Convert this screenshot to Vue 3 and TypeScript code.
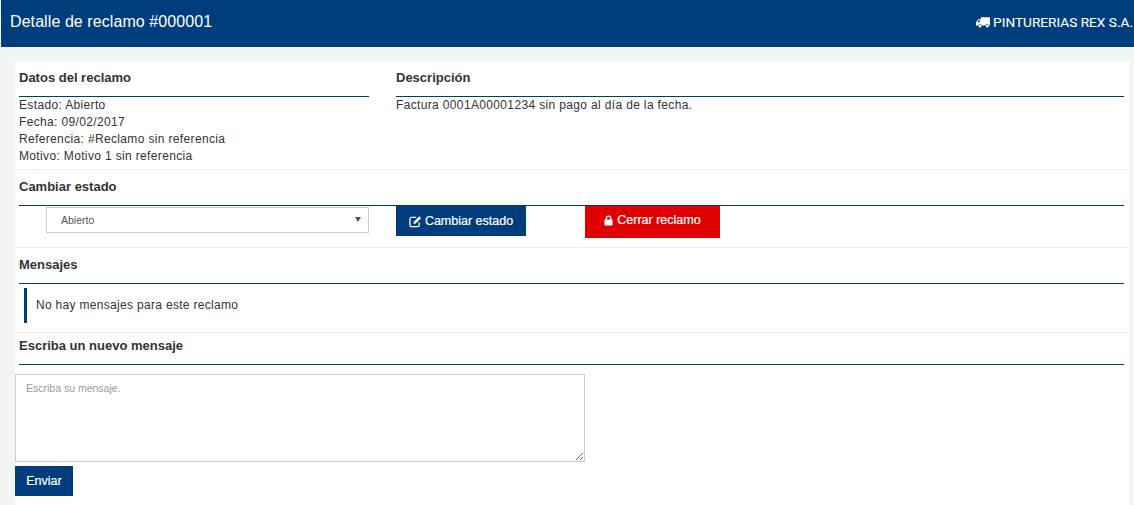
<script setup lang="ts">
const datos: string[] = [
  'Estado: Abierto',
  'Fecha: 09/02/2017',
  'Referencia: #Reclamo sin referencia',
  'Motivo: Motivo 1 sin referencia',
]
</script>

<template>
  <div class="page">
    <header class="topbar">
      <h1 class="title">Detalle de reclamo #000001</h1>
      <div class="brand">
        <svg class="truck" viewBox="0 0 16 12" width="14" height="11" aria-hidden="true">
          <path fill="currentColor" d="M5.5 0H16v9.5h-1.2a2 2 0 0 0-3.9 0H6.6a2 2 0 0 0-3.9 0H0V5.6L2.6 2.2H5.5zM1.3 5.6h3V3.3H3z" fill-rule="evenodd" />
          <circle fill="currentColor" cx="4.6" cy="10.2" r="1.5" />
          <circle fill="currentColor" cx="12.9" cy="10.2" r="1.5" />
        </svg>
        <span>PINTURERIAS REX S.A.</span>
      </div>
    </header>

    <main class="card">
      <section class="row first">
        <div class="col-left">
          <h2 class="heading">Datos del reclamo</h2>
          <p v-for="d in datos" :key="d" class="line">{{ d }}</p>
        </div>
        <div class="col-right">
          <h2 class="heading">Descripción</h2>
          <p class="line">Factura 0001A00001234 sin pago al día de la fecha.</p>
        </div>
      </section>

      <section class="row-block change">
        <h2 class="heading full">Cambiar estado</h2>
        <div class="controls">
          <div class="select-wrap">
            <select class="select">
              <option>Abierto</option>
            </select>
          </div>
          <button class="btn blue change-btn" type="button">
            <svg viewBox="0 0 14 14" width="13" height="13" aria-hidden="true">
              <path fill="none" stroke="currentColor" stroke-width="1.4" d="M11 8.2V11a1.6 1.6 0 0 1-1.6 1.6H2.6A1.6 1.6 0 0 1 1 11V4.2a1.6 1.6 0 0 1 1.6-1.6h5" />
              <path fill="currentColor" d="M5.2 7.2 11 1.4l2 2-5.8 5.8-2.4.5z" />
            </svg>
            Cambiar estado
          </button>
          <button class="btn red close-btn" type="button">
            <svg viewBox="0 0 10 12" width="9" height="11" aria-hidden="true">
              <path fill="none" stroke="currentColor" stroke-width="1.5" d="M2.5 5.5V3.6a2.5 2.5 0 0 1 5 0v1.9" />
              <rect fill="currentColor" x="0.5" y="5" width="9" height="6.5" rx="0.8" />
            </svg>
            Cerrar reclamo
          </button>
        </div>
      </section>

      <section class="row-block messages">
        <h2 class="heading full">Mensajes</h2>
        <div class="callout">No hay mensajes para este reclamo</div>
      </section>

      <section class="row-block compose">
        <h2 class="heading full">Escriba un nuevo mensaje</h2>
        <textarea class="textarea" placeholder="Escriba su mensaje."></textarea>
        <button class="btn blue send" type="button">Enviar</button>
      </section>
    </main>
  </div>
</template>

<style>
html, body { margin: 0; background: #f3f5f5; }
</style>

<style scoped>
.page {
  height: 505px;
  overflow: hidden;
  padding-left: 1px;
  box-sizing: border-box;
  background: #f3f5f5;
  font-family: "Liberation Sans", Arial, sans-serif;
  color: #333;
}
.topbar {
  height: 47px;
  box-sizing: border-box;
  background: #003d7c;
  color: #fff;
  display: flex;
  align-items: center;
  justify-content: space-between;
  padding: 0 0 3px 9px;
}
.title {
  margin: 0;
  font-size: 16px;
  font-weight: 400;
  letter-spacing: 0.08px;
}
.brand {
  display: flex;
  align-items: center;
  gap: 3px;
  font-family: Roboto, sans-serif;
  font-size: 13.65px;
  margin-right: 1px;
  -webkit-text-stroke: 0.1px #fff;
}
.card {
  margin: 14px 5px 0 14px;
  height: 444px;
  background: #fff;
  box-sizing: border-box;
  padding: 0;
}
.row.first {
  display: flex;
  height: 108px;
  padding: 0 5px 0 4px;
  border-bottom: 1px solid #eee;
  box-sizing: content-box;
}
.col-left { width: 350px; margin-right: 27px; }
.col-right { flex: 1; }
.heading {
  margin: 0;
  height: 36px;
  line-height: 33px;
  box-sizing: border-box;
  font-size: 13px;
  font-weight: 700;
  color: #333;
  border-bottom: 1px solid #003d6b;
}
.line {
  margin: 0;
  font-size: 12px;
  line-height: 17px;
  letter-spacing: 0.35px;
}
.row-block {
  padding: 0 5px 0 4px;
  border-bottom: 1px solid #eee;
}
.change { height: 77px; }
.controls {
  display: flex;
  align-items: flex-start;
  padding-left: 27px;
}
.select-wrap {
  position: relative;
  width: 323px;
  margin-right: 27px;
  padding-top: 1px;
}
.select-wrap::after {
  content: "";
  position: absolute;
  right: 8px;
  top: 11px;
  border-left: 3px solid transparent;
  border-right: 3px solid transparent;
  border-top: 5px solid #555;
}
.select {
  display: block;
  width: 100%;
  height: 26px;
  appearance: none;
  font-family: "Liberation Sans", Arial, sans-serif;
  font-size: 10.5px;
  padding-left: 14px;
  color: #555;
  background: #fff;
  border: 1px solid #ccc;
  border-radius: 0;
  outline: 0;
}
.btn {
  border: 0;
  color: #fff;
  font-family: "Liberation Sans", Arial, sans-serif;
  font-size: 12.5px;
  font-weight: 400;
  display: inline-flex;
  align-items: center;
  justify-content: center;
  gap: 3px;
  padding: 0;
  -webkit-text-stroke: 0.2px #fff;
}
.blue { background: #003d7c; }
.red { background: #e00000; }
.change-btn { width: 130px; height: 30px; margin-right: 59px; }
.close-btn { width: 135px; height: 32px; padding-bottom: 4px; gap: 4px; }
.messages { height: 84px; }
.callout {
  margin: 4px 0 0 5px;
  height: 35px;
  border-left: 3px solid #003d7c;
  padding-left: 9px;
  font-size: 12px;
  line-height: 34px;
  letter-spacing: 0.31px;
}
.compose { padding: 0; border-bottom: 0; }
.compose .heading { margin: 0 5px 0 4px; height: 32px; line-height: 26px; }
.textarea {
  display: block;
  width: 570px;
  height: 88px;
  margin-top: 9px;
  box-sizing: border-box;
  border: 1px solid #ccc;
  padding: 7px 10px;
  font-family: "Liberation Sans", Arial, sans-serif;
  font-size: 10.5px;
  outline: 0;
}
.textarea::placeholder { color: #999; }
.send { width: 58px; height: 30px; margin-top: 4px; }
</style>
